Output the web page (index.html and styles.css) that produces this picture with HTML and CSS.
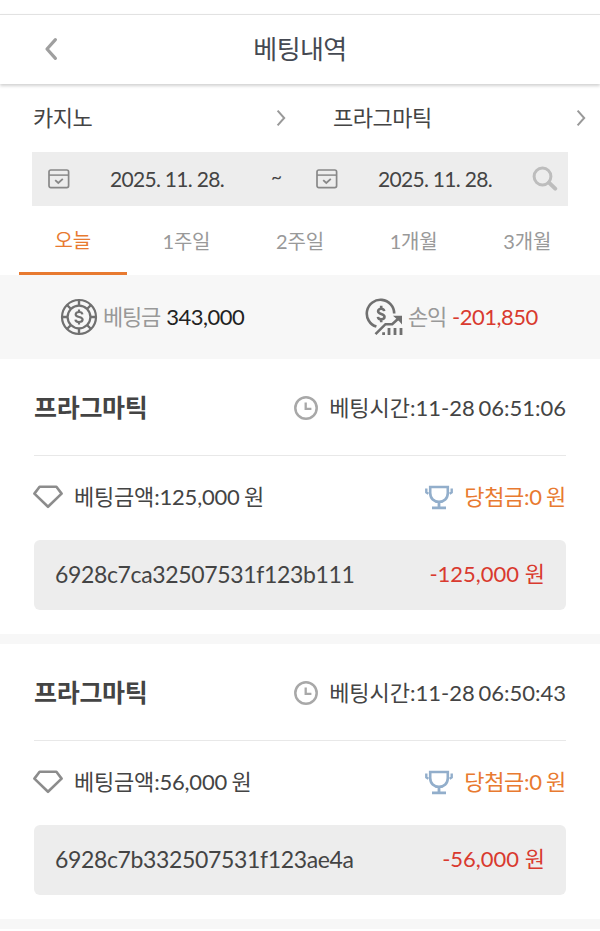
FILE: index.html
```html
<!DOCTYPE html>
<html lang="ko">
<head>
    <meta charset="UTF-8">
    <meta name="viewport" content="width=device-width, initial-scale=1.0">
    <title>베팅내역</title>
    <link rel="stylesheet" href="styles.css">
</head>
<body>
    <!-- Shared icons -->
    <svg class="icon-defs" width="0" height="0">
        <symbol id="icon-calendar" viewBox="0 0 22 20">
            <rect x="1" y="1" width="19.6" height="17.6" rx="1.8" fill="none" stroke="#888" stroke-width="1.7"/>
            <path d="M1 6.1H20.6" stroke="#888" stroke-width="1.5"/>
            <path d="M7.2 11.1L10.3 13.9L14.8 9.9" fill="none" stroke="#888" stroke-width="1.9"/>
        </symbol>
        <symbol id="icon-next" viewBox="0 0 10 18">
            <path d="M1.6 1.6L8.2 9L1.6 16.4" fill="none" stroke="#999" stroke-width="2"/>
        </symbol>
        <symbol id="icon-clock" viewBox="0 0 26 26">
            <circle cx="13" cy="13" r="10.7" fill="none" stroke="#a8a8a8" stroke-width="2.5"/>
            <path d="M12.7 7.5V13.9H18.4" fill="none" stroke="#a8a8a8" stroke-width="2.3"/>
        </symbol>
        <symbol id="icon-diamond" viewBox="0 0 30 24">
            <path d="M6.6 1.8H23.4L28.6 8.6L15 21.8L1.4 8.6Z" fill="none" stroke="#8c8c8c" stroke-width="2.6" stroke-linejoin="round"/>
        </symbol>
        <symbol id="icon-trophy" viewBox="0 0 28 25">
            <path d="M5.2 2H22.8V8C22.8 13.5 19 16.8 14 16.8S5.2 13.5 5.2 8Z" fill="none" stroke="#92aecb" stroke-width="2.6"/>
            <path d="M14 17V22M7 22.8H21" fill="none" stroke="#92aecb" stroke-width="2.8"/>
            <path d="M1.3 3.6V7.4L3.4 8.8M26.7 3.6V7.4L24.6 8.8" fill="none" stroke="#92aecb" stroke-width="2.4"/>
        </symbol>
    </svg>

    <header class="header">
        <svg class="back" viewBox="0 0 14 24"><path d="M11.4 2.6L3 12L11.4 21.4" fill="none" stroke="#9f9f9f" stroke-width="3.2" stroke-linecap="round" stroke-linejoin="round"/></svg>
        <h1 class="title">베팅내역</h1>
    </header>

    <div class="selects">
        <div class="select"><span>카지노</span><svg class="next"><use href="#icon-next"/></svg></div>
        <div class="select"><span>프라그마틱</span><svg class="next"><use href="#icon-next"/></svg></div>
    </div>

    <div class="dates">
        <svg class="calendar"><use href="#icon-calendar"/></svg>
        <span class="date">2025. 11. 28.</span>
        <span class="tilde">~</span>
        <svg class="calendar"><use href="#icon-calendar"/></svg>
        <span class="date">2025. 11. 28.</span>
        <svg class="search" viewBox="0 0 26 26"><circle cx="10.5" cy="10.5" r="8.4" fill="none" stroke="#bdbdbd" stroke-width="3"/><path d="M17 16.6L23.2 22.6" stroke="#bdbdbd" stroke-width="4" stroke-linecap="round"/></svg>
    </div>

    <nav class="tabs">
        <span class="tab active">오늘</span>
        <span class="tab">1주일</span>
        <span class="tab">2주일</span>
        <span class="tab">1개월</span>
        <span class="tab">3개월</span>
    </nav>

    <div class="summary">
        <div class="total">
            <svg class="total-icon" viewBox="0 0 38 38" fill="none" stroke="#707070" stroke-width="2.2">
                <circle cx="19" cy="19" r="17"/>
                <circle cx="19" cy="19" r="11.4"/>
                <path d="M19 2V7.6M19 30.4V36M2 19H7.6M30.4 19H36M7 7L11 11M31 7L27 11M7 31L11 27M31 31L27 27" stroke-width="2.4"/>
                <path d="M22.4 16.4C22.2 14.8 21 14 19 14C17 14 15.7 14.9 15.7 16.4C15.7 20 22.6 18 22.6 21.6C22.6 23.1 21.1 24 19 24C16.8 24 15.6 23.2 15.4 21.6M19 11.4V14M19 24V26.6"/>
            </svg>
            <span class="total-name">베팅금</span>
            <span class="total-value">343,000</span>
        </div>
        <div class="total profit">
            <svg class="total-icon" viewBox="0 0 38 38" fill="none" stroke="#707070" stroke-width="2.6">
                <path d="M11.4 28.6A13.7 13.7 0 1 1 29.2 15.6"/>
                <path d="M19.2 13.2C19 11.5 17.7 10.7 16.2 10.7C14.4 10.7 13.1 11.7 13.1 13.3C13.1 16.8 19.5 15.2 19.5 18.8C19.5 20.4 18.1 21.3 16.2 21.3C14.4 21.3 13.1 20.4 12.9 18.8M16.2 7.8V11M16.2 21V24.2"/>
                <path d="M10.5 36.2L20.5 26.2H27.2L34 20"/>
                <path d="M28 17.8H37V26.4L34.4 23.6L30.8 20.2Z" fill="#707070" stroke="none"/>
                <path d="M18.6 34.2V37M24 30V37M30 30V37M36 30V37" stroke-width="2.8"/>
            </svg>
            <span class="total-name">손익</span>
            <span class="total-value minus">-201,850</span>
        </div>
    </div>

    <main class="bets">
        <section class="bet">
            <div class="bet-head">
                <h2 class="provider">프라그마틱</h2>
                <div class="time"><svg class="clock"><use href="#icon-clock"/></svg><span>베팅시간:11-28 06:51:06</span></div>
            </div>
            <div class="bet-info">
                <div class="amount"><svg class="diamond"><use href="#icon-diamond"/></svg><span>베팅금액:125,000 원</span></div>
                <div class="prize"><svg class="trophy"><use href="#icon-trophy"/></svg><span>당첨금:0 원</span></div>
            </div>
            <div class="result">
                <span class="bet-id">6928c7ca32507531f123b111</span>
                <span class="minus">-125,000 원</span>
            </div>
        </section>
        <section class="bet">
            <div class="bet-head">
                <h2 class="provider">프라그마틱</h2>
                <div class="time"><svg class="clock"><use href="#icon-clock"/></svg><span>베팅시간:11-28 06:50:43</span></div>
            </div>
            <div class="bet-info">
                <div class="amount"><svg class="diamond"><use href="#icon-diamond"/></svg><span>베팅금액:56,000 원</span></div>
                <div class="prize"><svg class="trophy"><use href="#icon-trophy"/></svg><span>당첨금:0 원</span></div>
            </div>
            <div class="result">
                <span class="bet-id">6928c7b332507531f123ae4a</span>
                <span class="minus">-56,000 원</span>
            </div>
        </section>
    </main>
</body>
</html>
```

FILE: styles.css
```css
* {
  box-sizing: border-box;
}
body {
  margin: 0;
  padding-top: 14px;
  height: 931px;
  overflow: hidden;
  background-color: #fff;
  color: #444;
  font-family: Lato, "Noto Sans CJK KR", sans-serif;
  font-size: 22px;
  line-height: 30px;
  white-space: nowrap;
}
svg {
  display: block;
  flex-shrink: 0;
}
.icon-defs {
  display: none;
}
.header {
  display: grid;
  grid-template-columns: 100px 1fr 100px;
  align-items: center;
  height: 70px;
  padding-bottom: 2px;
  border-top: 1px solid #e2e2e2;
  box-shadow: 0 2px 3px rgba(0, 0, 0, 0.18);
}
.back {
  width: 14px;
  height: 24px;
  margin-left: 44px;
}
.title {
  margin: 0;
  text-align: center;
  color: #454952;
  font-size: 26px;
  font-weight: normal;
  letter-spacing: -0.6px;
}
.selects {
  display: grid;
  grid-template-columns: 1fr 1fr;
  height: 68px;
}
.select {
  display: flex;
  align-items: center;
  justify-content: space-between;
  padding-left: 33px;
  padding-right: 14px;
  letter-spacing: -0.5px;
}
.next {
  width: 10px;
  height: 18px;
}
.dates {
  display: grid;
  grid-template-columns: 62px 132px 74px 62px 132px 1fr;
  align-items: center;
  height: 54px;
  margin: 0 32px;
  padding-left: 16px;
  padding-right: 10px;
  background-color: #ededed;
  font-size: 21px;
}
.date {
  letter-spacing: -0.7px;
}
.calendar {
  width: 22px;
  height: 20px;
}
.search {
  width: 26px;
  height: 26px;
  justify-self: end;
}
.tilde {
  padding-left: 29px;
  padding-bottom: 5px;
  font-size: 19px;
}
.tabs {
  display: grid;
  grid-template-columns: repeat(5, 1fr);
  height: 69px;
  margin: 0 16px;
  color: #999;
  font-size: 20px;
}
.tab {
  margin: 0 3px;
  padding-top: 20px;
  text-align: center;
  letter-spacing: -0.2px;
}
.tab.active {
  padding-top: 19px;
  color: #e87a30;
  border-bottom: 3px solid #e87a30;
}
.summary {
  display: grid;
  grid-template-columns: 1fr 1fr;
  height: 84px;
  background-color: #f7f7f7;
}
.total {
  display: flex;
  align-items: center;
  padding-left: 60px;
}
.total.profit {
  padding-left: 65px;
}
.total-icon {
  width: 38px;
  height: 38px;
}
.total-name {
  margin-left: 5px;
  margin-right: 6px;
  color: #999;
  letter-spacing: -1.2px;
}
.total-value {
  color: #222;
  letter-spacing: -0.5px;
}
.minus,
.total-value.minus {
  color: #d93a2f;
}
.bet {
  height: 285px;
  padding: 0 34px;
  border-bottom: 10px solid #f7f7f7;
}
.bet-head,
.bet-info {
  display: flex;
  align-items: center;
  justify-content: space-between;
}
.bet-head {
  height: 97px;
  border-bottom: 1px solid #e8e8e8;
}
.provider {
  margin: 0;
  font-size: 25px;
  font-weight: bold;
  letter-spacing: -0.3px;
}
.time,
.amount,
.prize {
  display: flex;
  align-items: center;
}
.time {
  padding-top: 1px;
  word-spacing: -2px;
}
.clock {
  width: 26px;
  height: 26px;
  margin-right: 10px;
}
.bet-info {
  height: 84px;
  padding-bottom: 2px;
  letter-spacing: -0.2px;
  word-spacing: -1px;
}
.diamond {
  width: 30px;
  height: 24px;
  margin-left: -1px;
  margin-right: 11px;
}
.trophy {
  width: 28px;
  height: 25px;
  margin-right: 11px;
}
.prize {
  color: #e87a30;
  letter-spacing: -0.3px;
}
.result {
  display: flex;
  align-items: center;
  justify-content: space-between;
  height: 70px;
  padding: 0 21px 2px;
  border-radius: 6px;
  background-color: #ededed;
}
.bet-id {
  font-size: 23px;
  letter-spacing: -0.35px;
}
```
